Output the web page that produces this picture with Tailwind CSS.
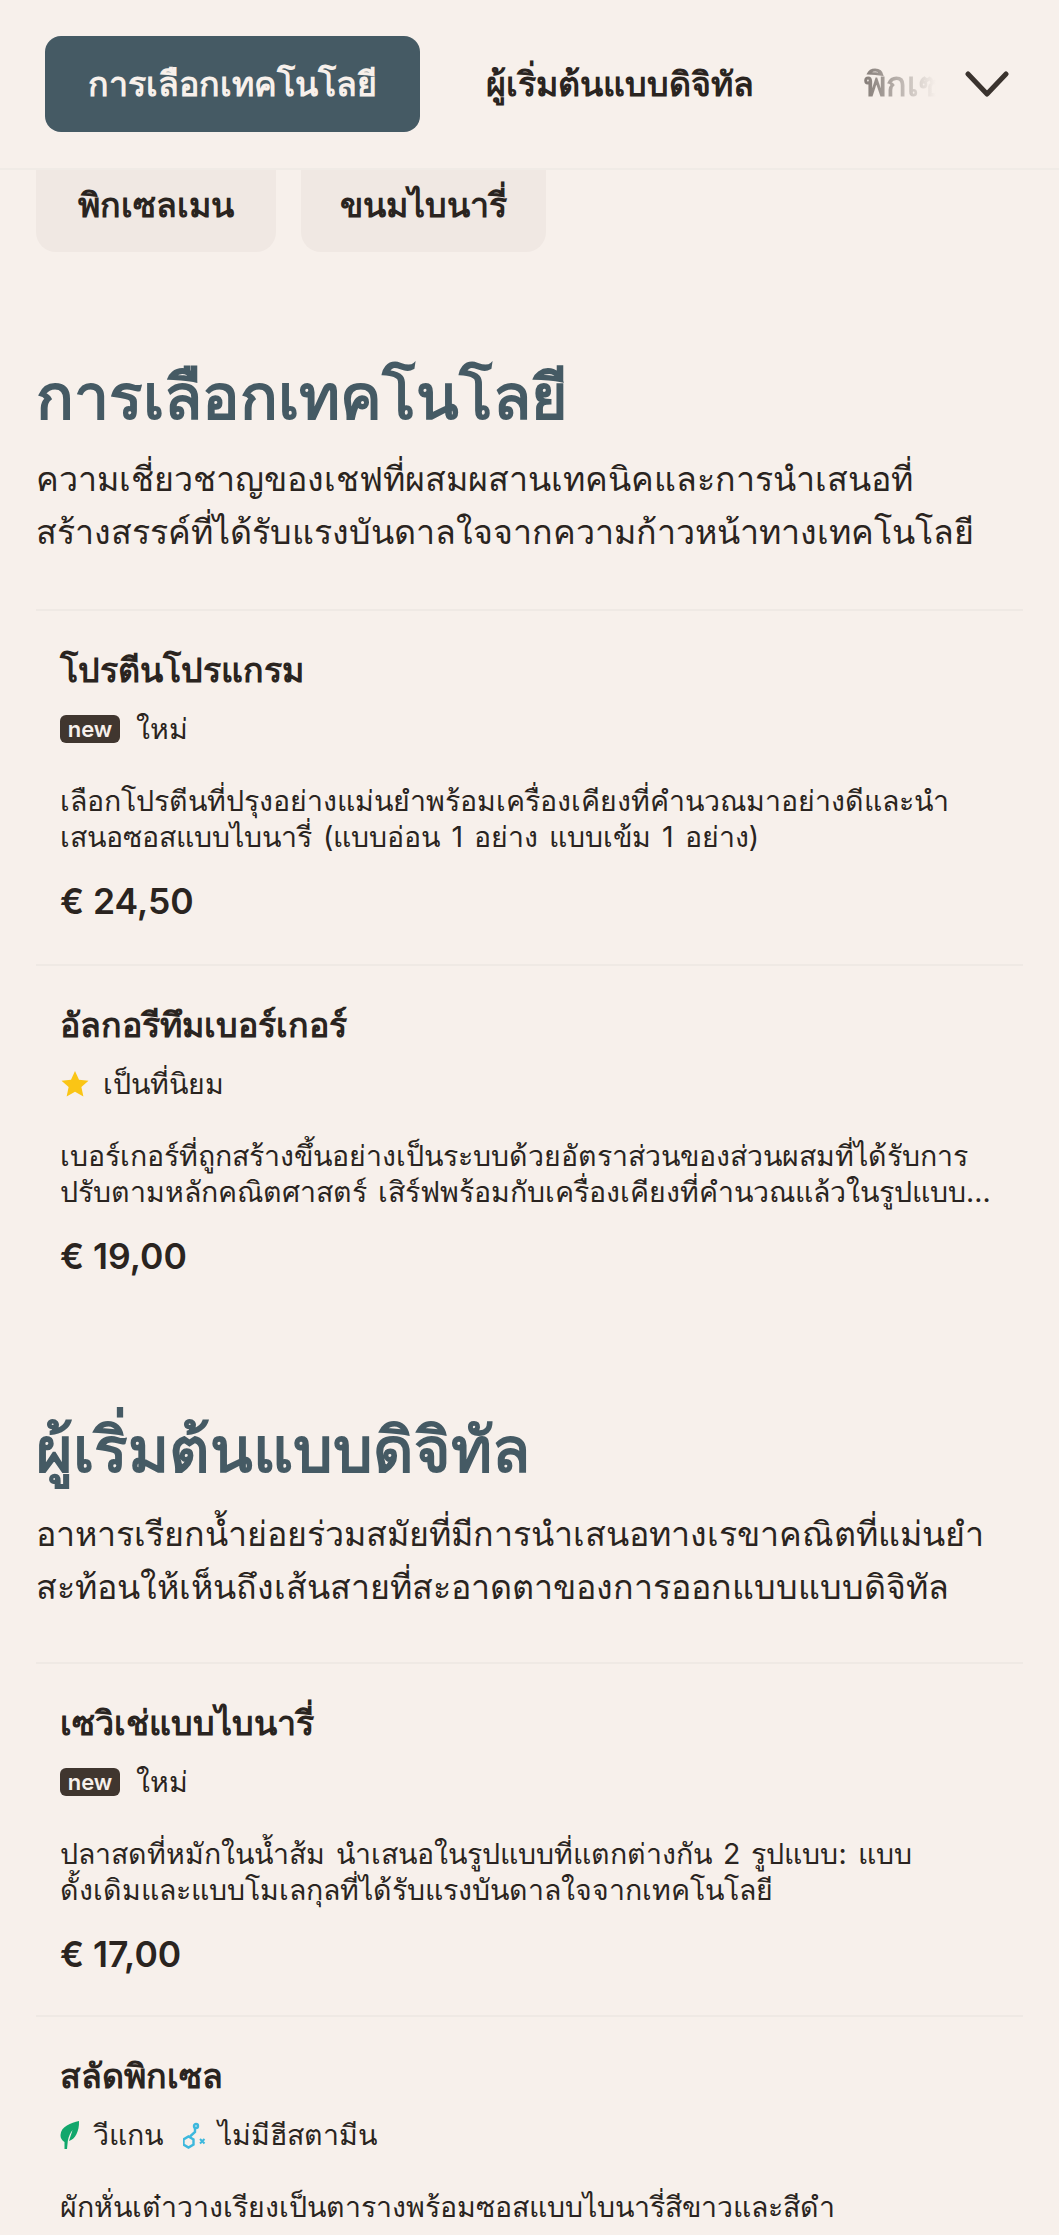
<!DOCTYPE html>
<html lang="th">
<head>
  <meta charset="UTF-8" />
  <meta name="viewport" content="width=device-width, initial-scale=1.0" />
  <title>เมนู</title>
  <script src="https://cdn.jsdelivr.net/npm/@tailwindcss/browser@4"></script>
</head>
<body class="bg-[#f7f0eb] text-[#2a2420] font-['Inter','Noto_Sans',sans-serif] h-[2235px] overflow-hidden">

  <header class="h-[170px] border-b-2 border-[#f0ebe6] flex items-center pl-[45px] pr-[50px]">
    <div class="flex items-center flex-1 overflow-hidden whitespace-nowrap">
      <a class="w-[375px] h-[96px] pb-[2px] shrink-0 flex items-center justify-center rounded-[16px] bg-[#455a64] text-[#f7f0eb] text-[34px] font-semibold">การเลือกเทคโนโลยี</a>
      <a class="ml-[66px] pb-[2px] shrink-0 text-[34px] font-semibold">ผู้เริ่มต้นแบบดิจิทัล</a>
      <div class="ml-[110px] w-[72px] pb-[2px] overflow-hidden text-[34px] font-semibold text-transparent bg-clip-text bg-gradient-to-r from-[#857d78] to-[#f7f0eb]">พิกเซลเมน</div>
    </div>
    <svg class="w-[44px] h-[28px] ml-[28px]" viewBox="0 0 44 28" fill="none" stroke="#3a332e" stroke-width="5" stroke-linecap="round" stroke-linejoin="round"><path d="M3 4 L22 24 L41 4" /></svg>
  </header>

  <div class="flex gap-[25px] px-[36px]">
    <a class="h-[82px] w-[240px] pb-[14px] flex items-center justify-center rounded-b-[20px] bg-[#f0e8e3] text-[34px] font-semibold">พิกเซลเมน</a>
    <a class="h-[82px] w-[245px] pb-[14px] flex items-center justify-center rounded-b-[20px] bg-[#f0e8e3] text-[34px] font-semibold">ขนมไบนารี่</a>
  </div>

  <main class="px-[36px]">
    <section class="mt-[104px]">
      <h2 class="text-[62.5px] leading-[80px] font-semibold text-[#455a64]">การเลือกเทคโนโลยี</h2>
      <p class="mt-[16px] text-[34px] leading-[53px]">ความเชี่ยวชาญของเชฟที่ผสมผสานเทคนิคและการนำเสนอที่<br>สร้างสรรค์ที่ได้รับแรงบันดาลใจจากความก้าวหน้าทางเทคโนโลยี</p>
      <ul class="mt-[51px]">
        <li class="border-t-2 border-[#efe9e4] h-[355px] px-[24px] pt-[35px]">
          <h3 class="text-[34px] leading-[48px] font-semibold">โปรตีนโปรแกรม</h3>
          <div class="mt-[15px] h-[40px] flex items-center text-[28.5px]">
            <span class="h-[28px] w-[60px] flex items-center justify-center rounded-[6px] bg-[#40362f] text-[#f7f0eb] text-[22px] font-semibold">new</span>
            <span class="ml-[16px]">ใหม่</span>
          </div>
          <p class="mt-[34px] text-[28.5px] leading-[36px] [word-spacing:3px]">เลือกโปรตีนที่ปรุงอย่างแม่นยำพร้อมเครื่องเคียงที่คำนวณมาอย่างดีและนำ<br>เสนอซอสแบบไบนารี่ (แบบอ่อน 1 อย่าง แบบเข้ม 1 อย่าง)</p>
          <div class="mt-[25px] text-[35.5px] leading-[44px] font-semibold">€ 24,50</div>
        </li>
        <li class="border-t-2 border-[#efe9e4] h-[355px] px-[24px] pt-[35px]">
          <h3 class="text-[34px] leading-[48px] font-semibold">อัลกอรีทึมเบอร์เกอร์</h3>
          <div class="mt-[15px] h-[40px] flex items-center text-[28.5px]">
            <svg class="w-[30px] h-[30px]" viewBox="0 0 24 24" fill="#fac515"><path d="M12 1.5l3.200 7 7.600.8-5.700 5.100 1.600 7.600L12 18.200 5.300 22l1.600-7.600L1.200 9.300l7.600-.8z" /></svg>
            <span class="ml-[13px]">เป็นที่นิยม</span>
          </div>
          <p class="mt-[34px] text-[28.5px] leading-[36px] [word-spacing:3px]">เบอร์เกอร์ที่ถูกสร้างขึ้นอย่างเป็นระบบด้วยอัตราส่วนของส่วนผสมที่ได้รับการ<br>ปรับตามหลักคณิตศาสตร์ เสิร์ฟพร้อมกับเครื่องเคียงที่คำนวณแล้วในรูปแบบ...</p>
          <div class="mt-[25px] text-[35.5px] leading-[44px] font-semibold">€ 19,00</div>
        </li>
      </ul>
    </section>

    <section class="mt-[90px]">
      <h2 class="text-[62.5px] leading-[80px] font-semibold text-[#455a64]">ผู้เริ่มต้นแบบดิจิทัล</h2>
      <p class="mt-[18px] text-[34px] leading-[53px]">อาหารเรียกน้ำย่อยร่วมสมัยที่มีการนำเสนอทางเรขาคณิตที่แม่นยำ<br>สะท้อนให้เห็นถึงเส้นสายที่สะอาดตาของการออกแบบแบบดิจิทัล</p>
      <ul class="mt-[49px]">
        <li class="border-t-2 border-[#efe9e4] h-[353px] px-[24px] pt-[35px]">
          <h3 class="text-[34px] leading-[48px] font-semibold">เซวิเช่แบบไบนารี่</h3>
          <div class="mt-[15px] h-[40px] flex items-center text-[28.5px]">
            <span class="h-[28px] w-[60px] flex items-center justify-center rounded-[6px] bg-[#40362f] text-[#f7f0eb] text-[22px] font-semibold">new</span>
            <span class="ml-[16px]">ใหม่</span>
          </div>
          <p class="mt-[34px] text-[28.5px] leading-[36px] [word-spacing:3px]">ปลาสดที่หมักในน้ำส้ม นำเสนอในรูปแบบที่แตกต่างกัน 2 รูปแบบ: แบบ<br>ดั้งเดิมและแบบโมเลกุลที่ได้รับแรงบันดาลใจจากเทคโนโลยี</p>
          <div class="mt-[25px] text-[35.5px] leading-[44px] font-semibold">€ 17,00</div>
        </li>
        <li class="border-t-2 border-[#efe9e4] px-[24px] pt-[35px]">
          <h3 class="text-[34px] leading-[48px] font-semibold">สลัดพิกเซล</h3>
          <div class="mt-[15px] h-[40px] flex items-center text-[28.5px]">
            <svg class="w-[20px] h-[28px]" viewBox="0 0 20 28" fill="#12a76c"><path d="M19 0C11 2 1 5 .5 14c-.2 3 1.500 5.500 4 7L4.500 28h2.500l.8-8c1-5 2.500-8 4.700-11-1 4-2.500 7-3.500 11 6-1.500 10.500-10 10-20z" /></svg>
            <span class="ml-[13px]">วีแกน</span>
            <svg class="w-[26px] h-[28px] ml-[20px]" viewBox="0 0 26 28" fill="none" stroke="#3db8dd" stroke-width="2.400"><path d="M5.500 15.500l5 2.900v5.200l-5 2.900-5-2.900v-5.200z" /><path d="M7 15.500L12 11V7" /><circle cx="13" cy="5" r="2" /><path d="M17 18l4.500 4.500M21.500 18L17 22.500" stroke-width="2" /></svg>
            <span class="ml-[9px]">ไม่มีฮีสตามีน</span>
          </div>
          <p class="mt-[34px] text-[28.5px] leading-[36px]">ผักหั่นเต๋าวางเรียงเป็นตารางพร้อมซอสแบบไบนารี่สีขาวและสีดำ</p>
        </li>
      </ul>
    </section>
  </main>

</body>
</html>
